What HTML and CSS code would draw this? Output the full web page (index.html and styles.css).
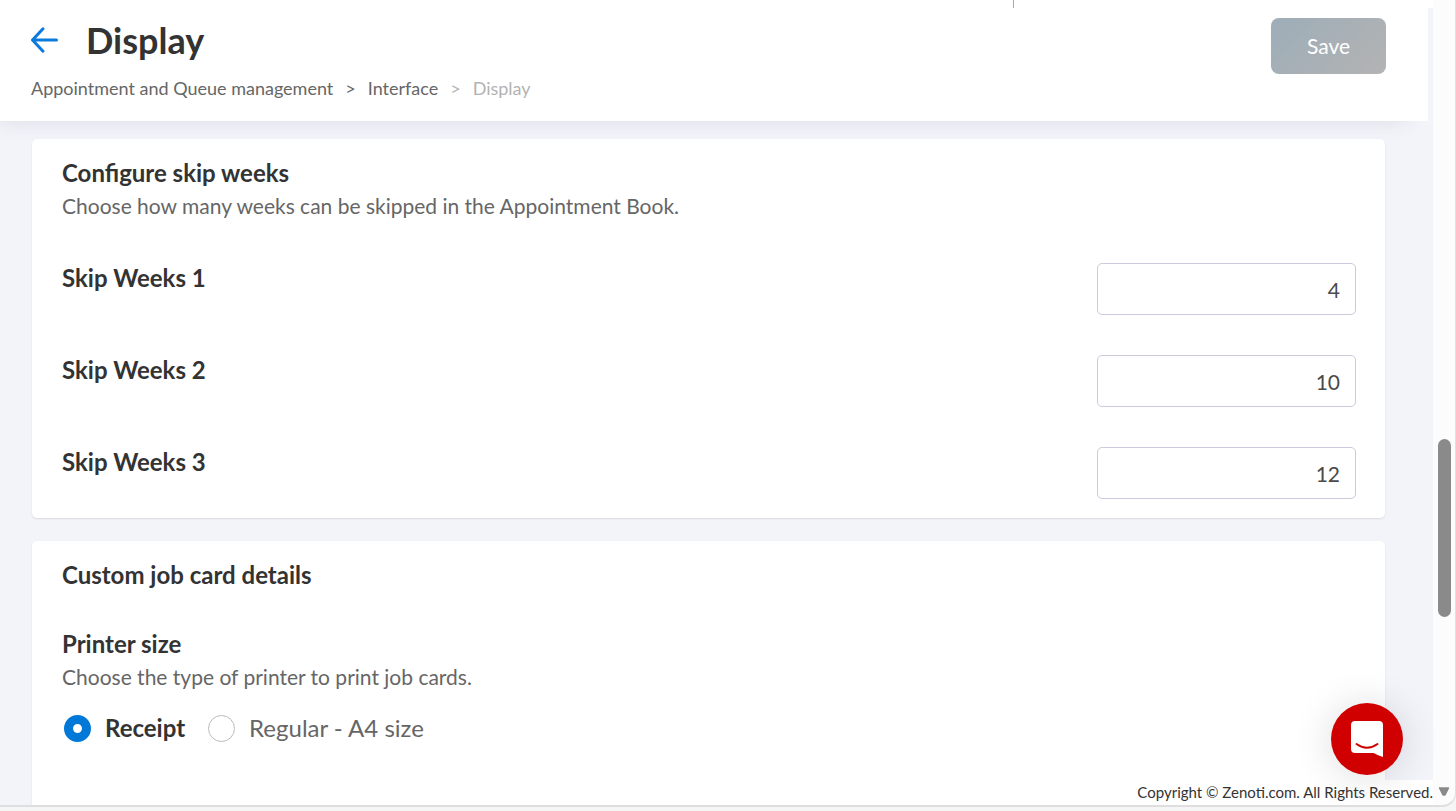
FILE: index.html
```html
<!DOCTYPE html>
<html lang="en">
<head>
	<title>Display</title>
	<meta charset="utf-8">
	<meta name="viewport" content="width=device-width, initial-scale=1">
	<link rel="stylesheet" href="styles.css">
</head>
<body>
	<div class="window">
		<div class="page">
			<div class="topbar"><span class="topbar-line"></span></div>
			<header class="header">
				<div class="header-left">
					<div class="title-row">
						<a class="back" href="#" aria-label="Back">
							<svg width="28" height="26" viewBox="0 0 28 26" fill="none" stroke="#0a7bdc" stroke-width="3" stroke-linecap="round" stroke-linejoin="round">
								<path d="M25.500 13H2M12 1.800L1.500 13L12 24.200"/>
							</svg>
						</a>
						<h1>Display</h1>
					</div>
					<nav class="breadcrumb">
						<a href="#">Appointment and Queue management</a>
						<span>&gt;</span>
						<a href="#">Interface</a>
						<span class="current">&gt;</span>
						<span class="current">Display</span>
					</nav>
				</div>
				<button class="save" type="button">Save</button>
			</header>
			<main class="content">
				<section class="card">
					<h2>Configure skip weeks</h2>
					<p>Choose how many weeks can be skipped in the Appointment Book.</p>
					<div class="fields">
						<div class="field">
							<label for="skip1">Skip Weeks 1</label>
							<input type="text" inputmode="numeric" id="skip1" value="4">
						</div>
						<div class="field">
							<label for="skip2">Skip Weeks 2</label>
							<input type="text" inputmode="numeric" id="skip2" value="10">
						</div>
						<div class="field">
							<label for="skip3">Skip Weeks 3</label>
							<input type="text" inputmode="numeric" id="skip3" value="12">
						</div>
					</div>
				</section>
				<section class="card card-job">
					<h2>Custom job card details</h2>
					<h2 class="sub">Printer size</h2>
					<p>Choose the type of printer to print job cards.</p>
					<div class="radios">
						<input type="radio" name="printer" id="receipt" checked>
						<label for="receipt">Receipt</label>
						<input type="radio" name="printer" id="regular">
						<label for="regular">Regular - A4 size</label>
					</div>
				</section>
			</main>
			<footer class="footer">Copyright © Zenoti.com. All Rights Reserved.</footer>
		</div>
		<div class="scrollbar">
			<div class="thumb"></div>
			<svg class="arrow" width="12" height="10" viewBox="0 0 12 10">
				<path d="M1.500 1H10.500L7 8H5Z" fill="#8a8a8a" stroke="#8a8a8a" stroke-width="1.500" stroke-linejoin="round"/>
			</svg>
		</div>
		<button class="chat" type="button" aria-label="Open chat">
			<svg width="32" height="36" viewBox="0 0 32 36">
				<path d="M4 0H28Q32 0 32 4V36Q27 34.500 22.500 32H4Q0 32 0 28V4Q0 0 4 0Z" fill="#fff"/>
				<path d="M5.500 23Q16 30.500 26.500 23" fill="none" stroke="#d00000" stroke-width="2" stroke-linecap="round"/>
			</svg>
		</button>
	</div>
</body>
</html>
```
FILE: styles.css
```css
*{
	box-sizing: border-box;
	margin: 0;
	padding: 0;
}

body{
	background: #f5f5f5;
	color: #333;
	font-family: Lato, "Liberation Sans", sans-serif;
	overflow: hidden;
}
a{
	color: inherit;
	text-decoration: none;
}
.window{
	position: relative;
	display: flex;
	height: calc(100vh - 4px);
	background: #fcfcfc;
	border-right: 1px solid #e0e0e0;
	border-bottom: 2px solid #dedede;
	border-radius: 0 0 14px 0;
	overflow: hidden;
}
.page{
	position: relative;
	flex: 1;
	display: flex;
	flex-direction: column;
	background: #f3f4fa;
	overflow: hidden;
}
.topbar{
	display: flex;
	justify-content: flex-end;
	flex: none;
	height: 8px;
	padding-right: 419px;
	background: #fff;
}
.topbar-line{
	width: 1px;
	background: #aaa;
}

/* header */
.header{
	display: flex;
	justify-content: space-between;
	align-items: flex-start;
	flex: none;
	margin-right: 5px;
	padding: 10px 42px 20px 31px;
	background: #fff;
	box-shadow: -12px 10px 20px -10px rgba(60,50,70,.12);
}
.title-row{
	display: flex;
	align-items: center;
	gap: 27px;
	height: 44px;
}
.back{
	display: flex;
}
h1{
	font-size: 36px;
	line-height: 44px;
	font-weight: 700;
}
.breadcrumb{
	display: flex;
	gap: 12px;
	margin-top: 14px;
	color: #666;
	font-size: 18px;
	line-height: 25px;
}
.breadcrumb .current{
	color: #b3b3b3;
}
.save{
	width: 115px;
	height: 56px;
	padding-bottom: 2px;
	border: 0;
	border-radius: 8px;
	background: linear-gradient(135deg, #9dadb8, #b3b3b3);
	color: #fff;
	font-family: inherit;
	font-size: 21px;
}

/* cards */
.content{
	flex: 1;
	min-height: 0;
	padding: 18px 48px 0 32px;
}
.card{
	margin-bottom: 23px;
	padding: 18px 29px 19px 30px;
	background: #fff;
	border-radius: 5px;
	box-shadow: 0 1px 2px rgba(0,0,0,.1);
}
h2, .field label{
	font-size: 24px;
	line-height: 32px;
	font-weight: 700;
}
.field label{
	line-height: 30px;
}
.card p{
	color: #666;
	font-size: 21px;
	line-height: 34px;
}
.fields{
	display: flex;
	flex-direction: column;
	gap: 40px;
	margin-top: 40px;
}
.field{
	display: flex;
	justify-content: space-between;
	align-items: flex-start;
}
.field input{
	width: 259px;
	height: 52px;
	padding: 0 15px;
	border: 1px solid #cacbdc;
	border-radius: 5px;
	background: #fff;
	color: #4a4a4a;
	font-family: inherit;
	font-size: 21px;
	text-align: right;
}
.card-job{
	padding-bottom: 80px;
}
.sub{
	margin-top: 37px;
}
.radios{
	display: flex;
	align-items: center;
	margin-top: 16px;
	color: #666;
	font-size: 24px;
	line-height: 36px;
}
.radios input{
	appearance: none;
	width: 27px;
	height: 27px;
	margin: 0 14px 0 2px;
	border: 1px solid #bbb;
	border-radius: 50%;
	background: #fff;
}
.radios input:checked{
	border: 9px solid #0078d7;
}
.radios label{
	margin-right: 21px;
}
.radios input:checked + label{
	color: #333;
	font-weight: 700;
}

.footer{
	position: absolute;
	right: 0;
	bottom: 0;
	background: #fff;
	color: #333;
	font-size: 15px;
	line-height: 25px;
}

/* scroll track on the right edge */
.scrollbar{
	display: flex;
	flex-direction: column;
	align-items: center;
	justify-content: space-between;
	flex: none;
	width: 22px;
	padding: 439px 0 8px;
}
.thumb{
	width: 13px;
	height: 178px;
	border-radius: 7px;
	background: #8a8a8a;
}

.chat{
	position: absolute;
	right: 52px;
	bottom: 30px;
	display: flex;
	align-items: center;
	justify-content: center;
	width: 72px;
	height: 72px;
	border: 0;
	border-radius: 50%;
	background: #d00000;
	box-shadow: 0 2px 40px rgba(0,0,0,.14);
}
```
